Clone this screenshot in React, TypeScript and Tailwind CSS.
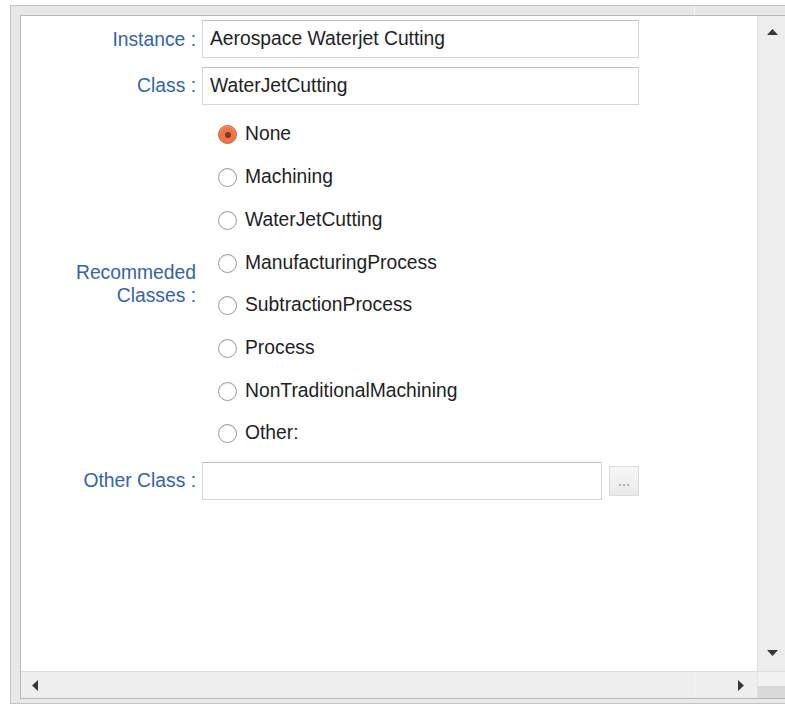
import React from "react";

const classes = [
  "None",
  "Machining",
  "WaterJetCutting",
  "ManufacturingProcess",
  "SubtractionProcess",
  "Process",
  "NonTraditionalMachining",
  "Other:",
];

const Label = ({ children }: { children: React.ReactNode }) => (
  <div className="text-right text-[#3563a3] leading-[23px]">{children}</div>
);

const TextBox = ({ value, className = "" }: { value?: string; className?: string }) => (
  <div
    className={`h-[38px] flex items-center pl-[7px] bg-white border border-[#d3d6dd] border-t-[#bdc0c8] text-[#1e1e24] ${className}`}
  >
    {value}
  </div>
);

const Radio = ({ checked }: { checked?: boolean }) =>
  checked ? (
    <span className="w-[19px] h-[19px] rounded-full bg-[#ee7549] border border-[#d2613b] flex items-center justify-center shadow-[inset_0_1px_1px_rgba(255,255,255,0.35)]">
      <span className="w-[6px] h-[6px] rounded-full bg-[#7d3524]" />
    </span>
  ) : (
    <span className="w-[19px] h-[19px] rounded-full bg-white border border-[#9a9a9a] shadow-[inset_0_1px_1px_rgba(0,0,0,0.08)]" />
  );

const Arrow = ({ dir }: { dir: "up" | "down" | "left" | "right" }) => {
  const pts = {
    up: "0,6 5.5,0 11,6",
    down: "0,0 11,0 5.5,6",
    left: "6,0 6,11 0,5.5",
    right: "0,0 6,5.5 0,11",
  }[dir];
  const vertical = dir === "up" || dir === "down";
  return (
    <svg width={vertical ? 11 : 6} height={vertical ? 6 : 11} viewBox={vertical ? "0 0 11 6" : "0 0 6 11"}>
      <polygon points={pts} fill="#383838" />
    </svg>
  );
};

export default function App() {
  return (
    <div
      className="w-[785px] h-[708px] bg-white overflow-hidden pt-[5px] pl-[10px] text-[19.3px]"
      style={{ fontFamily: '"Liberation Sans", Arial, sans-serif' }}
    >
      {/* window frame */}
      <div className="w-[800px] h-[699px] border border-[#c4c4c4] bg-[#e8e8e8] pt-[9px] pl-[9px] pb-[4px] relative">
        <div className="absolute top-0 left-[683px] w-px h-[9px] bg-[#f4f4f4]" />
        <div className="h-full border border-[#b8b8b8] flex flex-col bg-white">
          <div className="flex flex-1 min-h-0">
            {/* form */}
            <div className="w-[736px] pt-[4px]">
              <div className="grid grid-cols-[175px_437px] gap-x-[6px]">
                <div className="h-[38px] flex items-center justify-end">
                  <Label>Instance :</Label>
                </div>
                <TextBox value="Aerospace Waterjet Cutting" />

                <div className="h-[37px] mt-[9px] flex items-center justify-end">
                  <Label>Class :</Label>
                </div>
                <TextBox value="WaterJetCutting" className="mt-[9px] h-[37px]" />

                <div className="mt-[8.6px] flex items-center justify-end">
                  <Label>
                    Recommeded
                    <br />
                    Classes :
                  </Label>
                </div>
                <div className="mt-[8.6px] pl-[16px]">
                  {classes.map((c, i) => (
                    <div key={c} className="h-[42.7px] flex items-center gap-[8px] text-[#1e1e24]">
                      <Radio checked={i === 0} />
                      <span>{c}</span>
                    </div>
                  ))}
                </div>

                <div className="h-[38px] mt-[6.6px] flex items-center justify-end">
                  <Label>Other Class :</Label>
                </div>
                <div className="mt-[6.6px] flex items-center gap-[7px]">
                  <TextBox className="w-[400px]" />
                  <button className="w-[30px] h-[30px] border border-[#dcdcdc] bg-gradient-to-b from-[#f7f7f7] to-[#e9e9e9] flex items-end justify-center pb-[9px] gap-[2px]">
                    <span className="w-[2px] h-[2px] bg-[#b0b0b0]" />
                    <span className="w-[2px] h-[2px] bg-[#b0b0b0]" />
                    <span className="w-[2px] h-[2px] bg-[#b0b0b0]" />
                  </button>
                </div>
              </div>
            </div>

            {/* vertical scrollbar */}
            <div className="w-[32px] bg-[#ededed] border-l border-[#e2e2e2] flex flex-col items-start pl-[9px] justify-between pt-[13px] pb-[15px]">
              <Arrow dir="up" />
              <Arrow dir="down" />
            </div>
          </div>

          {/* horizontal scrollbar */}
          <div className="h-[27px] flex border-t border-[#dcdcdc] bg-[#eeeeee]">
            <div className="w-[736px] flex items-center justify-between pl-[11px] pr-[13px] relative">
              <div className="absolute left-[673px] top-0 bottom-0 w-px bg-[#f6f6f6]" />
              <Arrow dir="left" />
              <Arrow dir="right" />
            </div>
            <div className="w-[32px] flex flex-col border-l border-[#e4e4e4]">
              <div className="h-[14px] bg-[#f1f1f1]" />
              <div className="flex-1 bg-[#d9d9d9]" />
            </div>
          </div>
        </div>
      </div>
    </div>
  );
}
